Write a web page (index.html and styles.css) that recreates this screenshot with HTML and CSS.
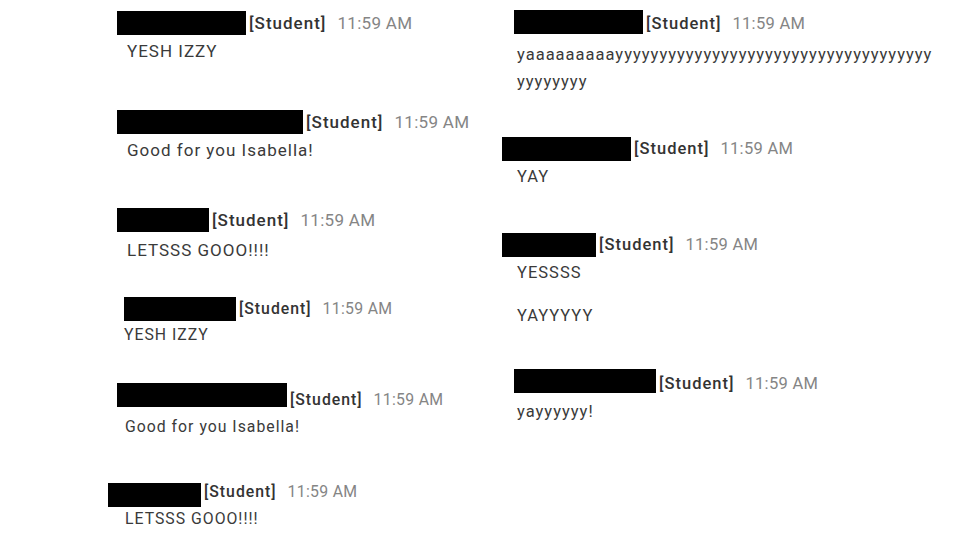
FILE: index.html
```html
<!DOCTYPE html>
<html>
<head>
    <meta charset="utf-8" />
    <title>Class chat</title>
    <link rel="stylesheet" href="styles.css">
</head>
<body>
    <div id="board">
        <div class="column left">
            <div class="msg m1">
                <div class="head"><span class="redact w129"></span><span class="role">[Student]</span><span class="time">11:59 AM</span></div>
                <p class="text">YESH IZZY</p>
            </div>
            <div class="msg m2">
                <div class="head"><span class="redact w186"></span><span class="role">[Student]</span><span class="time">11:59 AM</span></div>
                <p class="text">Good for you Isabella!</p>
            </div>
            <div class="msg m3">
                <div class="head"><span class="redact w92"></span><span class="role">[Student]</span><span class="time">11:59 AM</span></div>
                <p class="text">LETSSS GOOO!!!!</p>
            </div>
            <div class="msg small m4">
                <div class="head"><span class="redact w112"></span><span class="role">[Student]</span><span class="time">11:59 AM</span></div>
                <p class="text">YESH IZZY</p>
            </div>
            <div class="msg small m5">
                <div class="head"><span class="redact w170"></span><span class="role">[Student]</span><span class="time">11:59 AM</span></div>
                <p class="text">Good for you Isabella!</p>
            </div>
            <div class="msg small m6">
                <div class="head"><span class="redact w93"></span><span class="role">[Student]</span><span class="time">11:59 AM</span></div>
                <p class="text">LETSSS GOOO!!!!</p>
            </div>
        </div>

        <div class="column right">
            <div class="msg r1">
                <div class="head"><span class="redact w129"></span><span class="role">[Student]</span><span class="time">11:59 AM</span></div>
                <p class="text long">yaaaaaaaaayyyyyyyyyyyyyyyyyyyyyyyyyyyyyyyyyyyyyyyyyyyy</p>
            </div>
            <div class="msg r2">
                <div class="head"><span class="redact w129"></span><span class="role">[Student]</span><span class="time">11:59 AM</span></div>
                <p class="text">YAY</p>
            </div>
            <div class="msg r3">
                <div class="head"><span class="redact w94"></span><span class="role">[Student]</span><span class="time">11:59 AM</span></div>
                <p class="text">YESSSS</p>
                <p class="text next">YAYYYYY</p>
            </div>
            <div class="msg r4">
                <div class="head"><span class="redact w142"></span><span class="role">[Student]</span><span class="time">11:59 AM</span></div>
                <p class="text">yayyyyyy!</p>
            </div>
        </div>
    </div>
</body>
</html>
```

FILE: styles.css
```css
body {
    margin: 0;
    padding: 0;
    background: #ffffff;
    font-family: Roboto, "Noto Sans", Arial, sans-serif;
    color: #3a3a3a;
    overflow: hidden;
}

#board {
    display: flex;
    width: 960px;
    height: 540px;
}

.column {
    display: flex;
    flex-direction: column;
}

.column.left {
    width: 394px;
    padding-left: 108px;
    font-size: 17px;
}

.column.right {
    width: 440px;
    font-size: 16.5px;
}

.msg.small {
    font-size: 15.8px;
}

.head {
    display: flex;
    align-items: center;
    height: 24px;
    white-space: nowrap;
}

.redact {
    display: block;
    height: 24px;
    background: #000;
    margin-right: 3px;
}

.role {
    font-weight: 500;
    color: #333;
    letter-spacing: 1px;
    margin-right: 11px;
}

.time {
    color: #858585;
    letter-spacing: 0.3px;
}

.text {
    margin: 0;
    line-height: 27px;
    letter-spacing: 1px;
}

.text.long {
    width: 416px;
    word-break: break-all;
}

.text.next {
    margin-top: 16px;
}

/* redaction widths */
.w92 { width: 92px; }
.w93 { width: 93px; }
.w94 { width: 94px; }
.w112 { width: 112px; }
.w129 { width: 129px; }
.w142 { width: 142px; }
.w170 { width: 170px; }
.w186 { width: 186px; }

/* left column, pasted pieces */
.m1 { margin: 11px 0 0 9px; }
.m1 .text { margin-top: 3px; padding-left: 10px; }
.m2 { margin: 45px 0 0 9px; }
.m2 .text { margin-top: 3px; padding-left: 10px; }
.m3 { margin: 44px 0 0 9px; }
.m3 .text { margin-top: 5px; padding-left: 10px; }
.m4 { margin: 33px 0 0 16px; }
.m4 .text { margin-top: 0; padding-left: 0; }
.m4 .role, .m4 .time { margin-bottom: 2px; }
.m5 { margin: 35px 0 0 9px; }
.m5 .text { margin-top: 6px; padding-left: 8px; }
.m5 .role, .m5 .time { margin-top: 8px; }
.m6 { margin: 43px 0 0 0; }
.m6 .text { margin-top: -2px; padding-left: 17px; }
.m6 .role, .m6 .time { margin-bottom: 8px; }

/* right column */
.r1 { margin: 10px 0 0 12px; }
.r1 .text { margin-top: 7px; padding-left: 3px; }
.r1 .role, .r1 .time { margin-top: 2px; }
.r2 { margin: 42px 0 0 0; }
.r2 .text { margin-top: 2px; padding-left: 15px; }
.r2 .role, .r2 .time { margin-bottom: 2px; }
.r3 { margin: 43px 0 0 0; }
.r3 .text { padding-left: 15px; }
.r3 .text:first-of-type { margin-top: 2px; }
.r3 .role, .r3 .time { margin-bottom: 2px; }
.r4 { margin: 40px 0 0 12px; }
.r4 .text { margin-top: 5px; padding-left: 3px; }
.r4 .role, .r4 .time { margin-top: 4px; }
```
